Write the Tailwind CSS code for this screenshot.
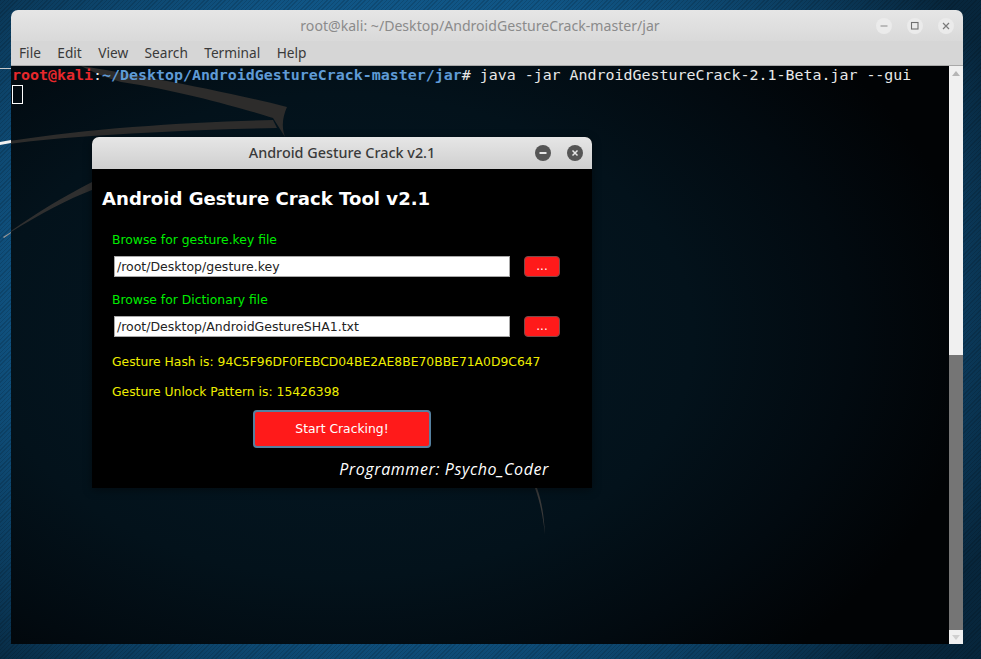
<!DOCTYPE html>
<html lang="en">
<head>
  <meta charset="UTF-8" />
  <title>Android Gesture Crack</title>
  <script src="https://cdn.jsdelivr.net/npm/@tailwindcss/browser@4"></script>
</head>
<body class="w-[981px] h-[659px] overflow-hidden bg-[radial-gradient(ellipse_640px_520px_at_420px_300px,#14649c_0%,#105585_60%,#0b3d60_82%,#07263c_100%)]">
  <div class="relative w-[981px] h-[659px] pt-[10px] pl-[11px] bg-[repeating-linear-gradient(135deg,rgba(0,0,0,0.14)_0px,rgba(0,0,0,0.14)_1px,transparent_1px,transparent_3px)]">
    <svg class="absolute left-0 top-0" width="11" height="250" viewBox="0 0 11 250">
      <rect x="0" y="68" width="11" height="1" fill="#c8c8c8" />
      <path d="M0 142L11 140V143L0 145Z" fill="#f2f2f2" />
      <path d="M3 237L11 232V233L4 238Z" fill="#9a9a9a" />
    </svg>
    <!-- terminal window -->
    <div class="relative w-[952px] h-[634px] flex flex-col rounded-t-[7px] overflow-hidden">
      <div class="h-[31px] shrink-0 flex items-center bg-[linear-gradient(#e6e6e6,#d9d9d9)] relative">
        <p class="w-full text-center pr-[14px] pt-[1px] font-['Noto_Sans'] text-[14.1px] text-[#8b8b8b]">root@kali: ~/Desktop/AndroidGestureCrack-master/jar</p>
        <div class="absolute right-[9px] top-[8px] flex gap-[15px]">
          <span class="w-[16px] h-[16px] rounded-full bg-[#ebebeb] flex items-center justify-center">
            <svg width="10" height="10" viewBox="0 0 10 10"><path d="M1.5 5h7" stroke="#8a8a8a" stroke-width="1.2" /></svg>
          </span>
          <span class="w-[16px] h-[16px] rounded-full bg-[#ebebeb] flex items-center justify-center">
            <svg width="10" height="10" viewBox="0 0 10 10"><rect x="1.5" y="1.5" width="6.5" height="6.5" fill="none" stroke="#6f6f6f" stroke-width="1.1" /></svg>
          </span>
          <span class="w-[16px] h-[16px] rounded-full bg-[#ebebeb] flex items-center justify-center">
            <svg width="10" height="10" viewBox="0 0 10 10"><path d="M2 2l6 6M8 2l-6 6" stroke="#7a7a7a" stroke-width="1.2" /></svg>
          </span>
        </div>
      </div>
      <div class="h-[25px] shrink-0 flex items-start pl-[8px] gap-[16.4px] bg-[#d6d6d6] border-b border-[#a9a9a9] font-['Noto_Sans'] text-[13.7px] leading-[23px] text-[#3a3a3a]">
        <span>File</span><span>Edit</span><span>View</span><span>Search</span><span>Terminal</span><span>Help</span>
      </div>
      <div class="flex-1 flex min-h-0">
        <div class="relative flex-1 overflow-hidden bg-[radial-gradient(ellipse_640px_440px_at_330px_270px,#041824_0%,#03121b_55%,#020a10_80%,#010305_100%)]">
          <svg class="absolute left-0 top-0" width="938" height="578" viewBox="0 0 938 578">
            <path d="M70 0C120 8 200 22 276 41C272 50 270 60 274 71L262 52C230 42 170 25 110 16C95 12 80 5 70 0Z" fill="#2d2c2b" />
            <path d="M-1 75C80 62 180 56 262 54L266 62C200 63 140 66 81 70C55 72 25 74 -1 78Z" fill="#2d2c2b" />
            <path d="M-8 171C25 150 55 134 81 124V116C50 132 20 150 -8 171Z" fill="#2f2f2f" />
            <path d="M526 422C531 436 533 450 534 469C532 450 529 436 524 422Z" fill="#3a3a3a" />
          </svg>
          <div class="relative pl-[1px] font-['DejaVu_Sans_Mono'] text-[14.95px] leading-[19px] text-[#e8e8e8]">
            <p class="whitespace-pre"><span class="font-bold text-[#e8282c]">root@kali</span><span>:</span><span class="font-bold text-[#5f9bd6]">~/Desktop/AndroidGestureCrack-master/jar</span><span># java -jar AndroidGestureCrack-2.1-Beta.jar --gui</span></p>
            <span class="block w-[11px] h-[19px] border border-white"></span>
          </div>
        </div>
        <!-- scrollbar -->
        <div class="w-[14px] flex flex-col bg-[#f0f0f0]">
          <div class="h-[14px] flex items-center justify-center">
            <svg width="8" height="5" viewBox="0 0 8 5"><path d="M0 5L4 0L8 5Z" fill="#b5b5b5" /></svg>
          </div>
          <div class="flex-1"></div>
          <div class="h-[275px] bg-[#757575]"></div>
          <div class="h-[14px] flex items-center justify-center">
            <svg width="8" height="5" viewBox="0 0 8 5"><path d="M0 0L4 5L8 0Z" fill="#d0d0d0" /></svg>
          </div>
        </div>
      </div>
    </div>

    <!-- dialog window -->
    <div class="absolute left-[92px] top-[137px] w-[500px] h-[351px] rounded-t-[7px] overflow-hidden bg-black font-['DejaVu_Sans'] shadow-[0_2px_10px_rgba(0,0,0,0.4)]">
      <div class="relative h-[32px] flex items-center justify-center bg-[linear-gradient(#e6e6e6,#cfcfcf)]">
        <p class="font-['Noto_Sans'] text-[14.4px] font-medium text-[#3a3a3a]">Android Gesture Crack v2.1</p>
        <div class="absolute left-[443px] top-[8px] flex gap-[16px]">
          <span class="w-[16px] h-[16px] rounded-full bg-[#555555] flex items-center justify-center">
            <svg width="10" height="10" viewBox="0 0 10 10"><path d="M1.5 5h7" stroke="#e6e6e6" stroke-width="1.8" /></svg>
          </span>
          <span class="w-[16px] h-[16px] rounded-full bg-[#555555] flex items-center justify-center">
            <svg width="10" height="10" viewBox="0 0 10 10"><path d="M2.5 2.5l5 5M7.5 2.5l-5 5" stroke="#e6e6e6" stroke-width="1.5" /></svg>
          </span>
        </div>
      </div>
      <h1 class="pl-[10px] pt-[18px] text-[18.1px] leading-[24px] font-bold text-white">Android Gesture Crack Tool v2.1</h1>
      <div class="pl-[20px] pt-[21px] text-[12.35px] leading-[16px]">
        <p class="text-[#00ee00]">Browse for gesture.key file</p>
        <div class="flex items-center pl-[2px] pt-[8px] gap-[14px]">
          <div class="w-[396px] h-[21px] bg-white border border-[#a8a8a8] pl-[2px] text-[12.5px] leading-[19px] text-[#222222]">/root/Desktop/gesture.key</div>
          <button class="w-[36px] h-[21px] rounded-[4px] bg-[#ff1a1a] border border-[#7a4a4a] text-white text-[12px] leading-[17px]">...</button>
        </div>
        <p class="pt-[15px] text-[#00ee00]">Browse for Dictionary file</p>
        <div class="flex items-center pl-[2px] pt-[8px] gap-[14px]">
          <div class="w-[396px] h-[21px] bg-white border border-[#a8a8a8] pl-[2px] text-[12.5px] leading-[19px] text-[#222222]">/root/Desktop/AndroidGestureSHA1.txt</div>
          <button class="w-[36px] h-[21px] rounded-[4px] bg-[#ff1a1a] border border-[#7a4a4a] text-white text-[12px] leading-[17px]">...</button>
        </div>
        <p class="pt-[17px] text-[#eeee00]">Gesture Hash is: 94C5F96DF0FEBCD04BE2AE8BE70BBE71A0D9C647</p>
        <p class="pt-[14px] text-[#eeee00]">Gesture Unlock Pattern is: 15426398</p>
      </div>
      <div class="pl-[161px] pt-[10px]">
        <button class="w-[178px] h-[38px] pt-[1px] rounded-[4px] bg-[#ff1a1a] border-2 border-[#55809f] text-[12.35px] text-white">Start Cracking!</button>
      </div>
      <p class="pt-[11px] pr-[43px] text-right font-['Open_Sans'] italic text-[16px] tracking-[0.6px] leading-[20px] text-white">Programmer: Psycho_Coder</p>
    </div>
  </div>
</body>
</html>
